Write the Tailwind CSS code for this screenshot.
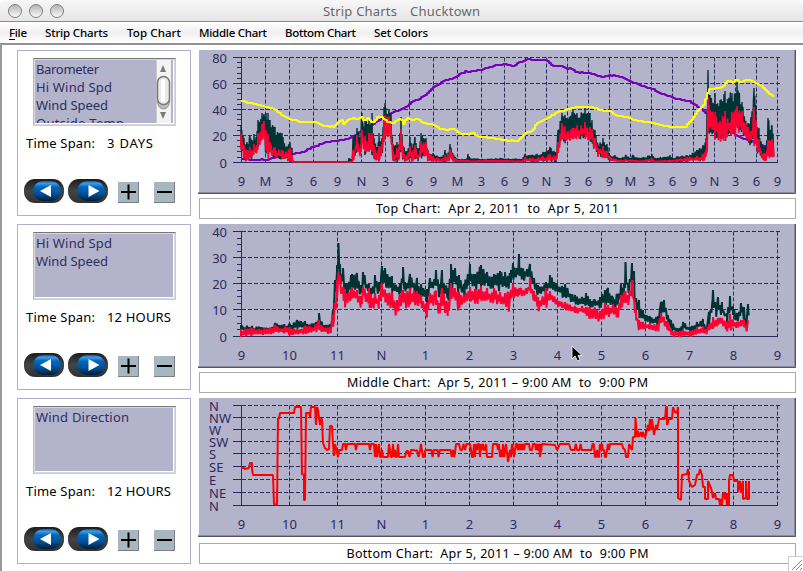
<!DOCTYPE html>
<html lang="en">
  <head>
    <meta charset="UTF-8" />
    <meta name="viewport" content="width=device-width, initial-scale=1.0" />
    <title>Strip Charts</title>
    <script src="https://cdn.jsdelivr.net/npm/@tailwindcss/browser@4"></script>
  </head>
  <body
    class="w-[803px] h-[571px] overflow-hidden bg-white text-black font-['Noto_Sans','Open_Sans',sans-serif] text-[12.5px] flex flex-col"
  >
    <!-- title bar -->
    <header
      class="relative h-[22px] shrink-0 flex items-center justify-center rounded-t-md border-b border-[#8a8a8a] bg-linear-to-b from-[#f7f7f7] to-[#e6e6e6] text-[#686868] text-[13px]"
    >
      <div class="absolute left-2 top-1 flex gap-[7px]">
        <span class="size-3.5 rounded-full border border-[#7d7d7d] bg-linear-to-b from-[#b5b5b5] to-[#fafafa]"></span>
        <span class="size-3.5 rounded-full border border-[#7d7d7d] bg-linear-to-b from-[#b5b5b5] to-[#fafafa]"></span>
        <span class="size-3.5 rounded-full border border-[#7d7d7d] bg-linear-to-b from-[#b5b5b5] to-[#fafafa]"></span>
      </div>
      <svg width="160" height="20" fill="currentColor">
        <text x="1" y="14.5" textLength="74">Strip Charts</text>
        <text x="88" y="14.5" textLength="70">Chucktown</text>
      </svg>
    </header>

    <!-- menu bar -->
    <nav class="h-[21px] shrink-0 bg-linear-to-b from-white via-[#f0f0f0] to-white">
      <svg width="440" height="21" class="text-[11.5px] font-medium">
        <text x="9" y="15" textLength="18">File</text>
        <path d="M9 17.5h6" stroke="#000" />
        <text x="45" y="15" textLength="63">Strip Charts</text>
        <text x="127" y="15" textLength="54">Top Chart</text>
        <text x="199" y="15" textLength="68">Middle Chart</text>
        <text x="285" y="15" textLength="71">Bottom Chart</text>
        <text x="374" y="15" textLength="54">Set Colors</text>
      </svg>
    </nav>

    <main
      class="relative grow border-t-2 border-l-2 border-t-[#909090] border-l-[#999] pl-[15px] pt-[5px] flex gap-[7px]"
    >
      <div id="panels" class="w-[174px] flex flex-col gap-2"></div>
      <div id="charts" class="w-[598px] flex flex-col"></div>
      <svg class="absolute right-0 bottom-0 bg-white" width="15" height="15">
        <path d="M.5 15V.5H15" fill="none" stroke="#ccc" />
        <path d="M4 14L14 4M8 14L14 8M12 14L14 12" stroke="#888" />
      </svg>
    </main>

    <!-- mouse pointer -->
    <svg class="absolute left-[571px] top-[345px]" width="12" height="18">
      <path
        d="M1 1V14L4 11L6.500 16L9 15L7 10.500H11Z"
        fill="#000"
        stroke="#fff"
        stroke-width=".8"
      />
    </svg>

    <!-- shared pill button gradients -->
    <svg class="absolute" width="0" height="0">
      <defs>
        <linearGradient id="pill" x2="0" y2="1">
          <stop offset="0" stop-color="#1c1c1c" />
          <stop offset=".5" stop-color="#444" />
          <stop offset="1" stop-color="#303030" />
        </linearGradient>
        <linearGradient id="lens" x2="0" y2="1">
          <stop offset="0" stop-color="#0a5eb0" />
          <stop offset=".12" stop-color="#3f9be0" />
          <stop offset=".3" stop-color="#0068c0" />
          <stop offset=".65" stop-color="#004f96" />
          <stop offset="1" stop-color="#001c38" />
        </linearGradient>
      </defs>
    </svg>

    <script>
      const panels = [
        { items: ["Barometer", "Hi Wind Spd", "Wind Speed", "Outside Temp"], span: "3 DAYS", w: 46, scroll: true },
        { items: ["Hi Wind Spd", "Wind Speed"], span: "12 HOURS", w: 64 },
        { items: ["Wind Direction"], span: "12 HOURS", w: 64 },
      ];
      const itemWidth = { Barometer: 63, "Hi Wind Spd": 76, "Wind Speed": 72, "Outside Temp": 88, "Wind Direction": 93 };

      const scrollBar = `
        <svg class="absolute right-[2px] top-0" width="15" height="64">
          <rect width="15" height="64" fill="#f3f3f3"/>
          <path d="M.5 0V64" stroke="#ccc"/>
          <path d="M4 12L7 5L10 12ZM4 52L7 59L10 52Z" fill="#7b7b7b"/>
          <path d="M1 40Q2 49 7.500 49T14 40" fill="#b9b9b9" stroke="#999"/>
          <rect x="1.500" y="16.500" width="12" height="28" rx="6" fill="#e9e9e9" stroke="#777" stroke-width="1.500"/>
          <rect x="5" y="19" width="4" height="23" rx="2" fill="#fff"/>
        </svg>`;

      const pill = (arrow) => `
        <svg width="40" height="24">
          <rect width="40" height="24" rx="11" fill="url(#pill)"/>
          <rect x="9" y="2" width="28" height="20" rx="10" fill="url(#lens)"/>
          <path d="${arrow}" fill="#fff"/>
        </svg>`;

      const square = (sign) => `
        <svg width="21" height="21">
          <rect width="21" height="21" fill="#a6b7c0"/>
          <path d="M0 20.500H20.500V0" stroke="#7c7c7c" fill="none"/>
          <path d="${sign}" stroke="#000" stroke-width="2"/>
        </svg>`;

      document.getElementById("panels").innerHTML = panels.map((p) => `
        <section class="h-[166px] border border-[#b0b0cc] pt-[7px]">
          <div class="relative ml-[15px] w-[143px] h-[68px] border-t border-l border-b border-r border-t-[#777] border-l-[#bbb] border-b-[#ccc] border-r-[#ccc] p-px bg-[#d8d8d8] overflow-hidden">
            <div class="relative h-full bg-[#b3b3cc] border-b border-r border-white overflow-hidden">
              <svg width="138" height="63" class="text-[13px]" fill="#2e2e60">
                ${p.items.map((t, i) => `<text x="1" y="${14 + i * 18}" textLength="${itemWidth[t]}">${t}</text>`).join("")}
              </svg>
              ${p.scroll ? scrollBar : ""}
            </div>
          </div>
          <svg width="170" height="20" class="mt-[7px] text-[13px]">
            <text x="8" y="15" textLength="69">Time Span:</text>
            <text x="89" y="15" textLength="${p.w}">${p.span}</text>
          </svg>
          <div class="flex items-end mt-[26px] pl-1.5">
            ${pill("M27 6V18L16 12Z")}
            <span class="w-1"></span>
            ${pill("M20.500 6V18L31.500 12Z")}
            <span class="w-2.5"></span>
            ${square("M3 10H18M10.500 2.500V17.500")}
            <span class="w-[15px]"></span>
            ${square("M3 10H18")}
          </div>
        </section>`).join("");

      // small repeatable random generator
      let seed = 7;
      const rnd = () => (seed = (seed * 16807) % 2147483647) / 2147483647;

      function lerp(env, x, col) {
        let i = 1;
        while (i < env.length - 1 && env[i][0] < x) i++;
        const a = env[i - 1], b = env[i];
        const t = Math.min(1, Math.max(0, (x - a[0]) / (b[0] - a[0])));
        return a[col] + (b[col] - a[col]) * t;
      }

      // zigzag between two columns of an envelope table, touching every knot
      function band(env, hi, lo, step, jitter) {
        const pts = [];
        let up = false;
        let k = 0;
        for (let x = env[0][0]; x <= env[env.length - 1][0]; x += step) {
          while (k < env.length && env[k][0] <= x) {
            pts.push(env[k][0] + "," + env[k][hi]);
            up = false;
            k++;
          }
          const a = lerp(env, x, hi), b = lerp(env, x, lo);
          const r = rnd() * jitter * (b - a);
          pts.push(x.toFixed(1) + "," + (up ? a + r : b - r).toFixed(1));
          up = !up;
        }
        return pts.join(" ");
      }

      // turns a smooth curve into the one pixel stairs of a sampled sensor
      function stairs(curve) {
        const env = curve.split(" ").map((p) => p.split(",").map(Number));
        const pts = [];
        let last = null;
        for (let x = env[0][0]; x <= env[env.length - 1][0]; x += 2) {
          const y = Math.round(lerp(env, x, 1) + (rnd() - 0.5) * 0.8);
          if (last !== null && y !== last) pts.push(x + "," + last);
          pts.push(x + "," + y);
          last = y;
        }
        return pts.join(" ");
      }

      const line = (pts, color, width) =>
        `<polyline points="${pts}" fill="none" stroke="${color}" stroke-width="${width}" stroke-linejoin="bevel"/>`;

      const NAVY = "#2b2b5c";
      const DARK = "#003333";
      const RED = "#ff0033";

      // x, gust top, speed top, speed bottom
      const topWind = [
        [241,125,134,150],[244,138,145,161],[247,142,150,162],[250,136,147,159],[252,140,151,159],[254,134,144,157],
        [256,137,147,155],[258,120,133,150],[262,113,124,142],[264,114,121,137],[266,113,130,161],[268,113,134,161],
        [270,120,142,157],[275,127,147,160],[282,133,150,160],[286,147,152,161],[290,142,148,162],[292,148,156,162],
        [293,162,162,162],[348,162,162,162],[349,158,162,162],[351,159,162,162],[352,162,162,162],[353,138,150,162],
        [357,128,135,153],[360,137,148,157],[362,113,130,145],[365,120,136,156],[369,120,133,152],[372,113,133,155],
        [374,138,145,159],[377,147,153,162],[379,133,146,162],[382,138,144,157],[384,107,120,142],[385,103,115,135],
        [389,110,116,138],[391,114,126,140],[393,144,152,162],[397,142,148,162],[399,144,146,162],[401,117,129,150],
        [403,146,150,162],[407,151,155,162],[410,137,146,160],[412,148,152,162],[415,137,145,160],[418,150,155,162],
        [421,133,141,160],[426,138,142,158],[428,150,152,162],[433,153,156,162],[442,157,159,162],[445,150,155,162],
        [447,156,157,162],[450,144,149,161],[453,154,155,162],[457,159,160,162],[467,159,160,162],[468,154,160,162],
        [470,158,161,162],[485,159,160,162],[500,158,160,162],[522,159,161,162],[525,154,157,162],[533,155,158,162],
        [543,152,156,162],[550,147,154,162],[556,152,156,162],[558,130,142,157],[562,113,123,142],[565,115,127,144],
        [568,119,131,140],[573,110,128,143],[577,113,125,140],[585,108,122,139],[590,113,127,141],[592,120,129,148],
        [595,130,138,150],[598,145,148,157],[603,138,146,158],[607,144,151,159],[610,155,157,162],[615,155,159,162],
        [620,158,160,162],[626,155,159,162],[630,158,160,162],[633,155,160,162],[640,158,161,162],[652,154,158,162],
        [655,158,161,162],[670,155,160,162],[673,158,160,162],[677,156,159,162],[687,155,157,162],[697,150,156,162],
        [703,145,154,162],[706,138,150,160],[707,110,140,158],[708,70,98,135],[709,95,105,137],[715,93,112,140],
        [720,100,121,143],[725,91,111,143],[732,93,112,139],[736,93,109,138],[737,82,106,133],[742,102,111,135],
        [748,123,127,143],[751,117,131,149],[754,88,107,148],[756,105,120,148],[757,127,138,155],[759,128,140,158],
        [763,147,154,162],[767,140,150,162],[768,118,140,161],[772,126,139,157],[774,133,146,160],
      ];

      const barometer =
        "241,159 253,159.500 265,160 278,157 290,154 300,153 308,149 315,146 322,143 332,141.500 348,138.500 353,137 362,130 377,121 387,115 395,111 400,109 403,108 410,103 414,101 420,98 427,93 432,88 438,84 445,80 452,79 458,75 465,71.500 475,71 483,69 488,68 493,66 503,64 513,66 520,62 524,60 527,59 535,60 545,60 553,66 560,66 567,68.500 570,68 575,72 590,73 600,77 613,75 625,79 632,83 643,86 652,89 660,93 673,98 690,102 697,107 707,114 718,123 730,132 737,136 745,139 757,143 765,146 770,147";
      const temp =
        "241,101 253,104 262,106.500 272,108 280,114 289,119.500 298,121.500 313,122 322,125 333,127 338,122 341,120 343,124 349,118.500 357,119 361,116.500 364,121 367,118 371,122 374,121 378,116 382,118 387,122 392,123 397,120 400,118 403,124 406,118 410,120 418,119 423,123 433,125 440,129 447,130 452,128 458,133 467,134 472,133 478,137 493,138 505,140 517,141 521,137 525,133 532,131 535,125 539,122 543,120 549,117 555,113 561,111 567,109 577,107 590,106.500 600,110 610,112 617,116 627,117 637,121 647,122 660,125 673,127 685,127 690,121 697,111 703,105 707,93 709,89 715,88 722,87 727,81 732,82 736,80 740,83 748,79 753,82 760,86 767,92 774,98";

      // x, gust top, gust bottom, speed top, speed bottom
      const midWind = [
        [241,325,332,329,337],[252,326,332,328,336],[270,328,333,328,337],[275,323,331,325,334],[290,324,331,327,335],
        [297,320,330,329,336],[305,321,331,326,334],[316,322,330,325,333],[319,313,326,320,331],[322,323,330,326,333],
        [330,324,330,328,336],[333,310,325,315,332],[335,280,310,303,318],[337,265,290,280,305],[338.500,243,275,272,285],
        [340,264,290,275,295],[343,268,289,287,299],[345,283,297,289,310],[351,275,295,289,302],[352,274,290,287,299],
        [357,273,297,290,304],[361,285,300,296,311],[363,272,290,287,299],[369,283,298,288,307],[371,288,298,294,311],
        [375,275,295,293,308],[379,282,296,295,309],[382,266,285,283,296],[385,268,288,290,306],[392,276,296,292,315],
        [400,283,295,295,316],[403,267,290,290,305],[405,282,296,293,312],[410,274,293,288,306],[417,278,296,291,306],
        [421,284,300,295,308],[427,289,303,302,319],[430,278,295,293,308],[436,270,289,291,306],[439,284,306,303,316],
        [442,270,295,288,310],[448,288,305,302,317],[451,264,290,283,305],[455,268,290,288,303],[459,275,295,292,313],
        [464,284,298,295,305],[470,264,287,287,302],[475,274,290,289,304],[481,265,289,286,304],[487,272,290,288,305],
        [494,274,290,288,305],[500,271,292,292,304],[505,272,290,293,306],[508,276,292,292,316],[511,270,286,290,302],
        [513,263,284,284,298],[517,268,280,289,298],[519,254,275,288,296],[521,268,282,288,296],[527,269,280,289,296],
        [530,264,283,278,294],[534,278,290,291,303],[538,285,298,297,313],[546,282,295,288,312],[550,275,288,291,299],
        [557,284,295,299,307],[562,286,298,302,309],[565,284,298,302,310],[575,295,305,306,313],[582,297,305,306,314],
        [586,293,306,307,316],[590,299,308,307,322],[595,300,308,308,318],[600,297,310,311,325],[605,290,308,303,318],
        [608,288,305,305,318],[613,298,308,304,316],[617,294,310,308,321],[621,284,302,295,308],[624,284,296,292,305],
        [625.500,262,285,291,303],[628,285,298,295,308],[632,263,285,280,295],[634,271,300,298,312],[636,298,312,310,324],
        [639,300,318,320,332],[643,310,322,322,330],[650,317,325,323,330],[658,316,326,325,333],[661,302,318,313,325],
        [664,300,315,317,325],[668,315,325,322,332],[671,320,334,329,337],[680,328,335,331,338],[683,322,331,330,336],
        [690,327,332,331,337],[697,322,330,327,335],[703,319,328,326,333],[706,328,333,330,337],[709,312,325,324,332],
        [713,290,310,317,330],[716,307,320,320,327],[718,297,313,318,326],[720,305,318,318,325],[722,302,318,318,328],
        [727,314,323,322,332],[730,296,315,314,334],[733,307,320,321,328],[737,313,323,322,328],[741,303,317,320,326],
        [744,307,320,320,330],[746,322,330,328,334],[748,304,318,320,332],[749,304,318,320,325],
      ];

      // wind direction wobbles between fixed compass steps
      function wobble(x0, x1, levels, step) {
        let s = "";
        for (let x = x0; x < x1; x += step) s += x + "," + levels[Math.floor(rnd() * levels.length)] + " ";
        return s;
      }
      const direction =
        "241,468 244,468 245,469 249,468 250,463 252,463 252,469 253,475 273,475 274,504 277,505 278,418 279,419 280,413 294,413 295,407 301,407 302,474 304,475 304,500 305,500 306,413 309,413 310,417 311,407 315,407 316,425 317,407 318,410 320,425 321,419 322,419 323,443 325,448 327,450 329,449 330,426 332,426 333,445 334,456 335,444 337,452 338,457 339,450 342,450 343,444 345,444 346,450 347,444 355,444 356,450 357,444 369,444 370,450 371,444 374,444 375,457 " +
        wobble(376, 405, [444, 450, 457, 457], 1) +
        wobble(405, 421, [450, 451, 457], 1.5) + "421,444 " +
        wobble(423, 456, [450, 450, 457], 1.2) +
        wobble(456, 470, [444, 444, 450], 1.5) +
        wobble(470, 505, [444, 450, 457], 1) + "506,444 508,462 " +
        wobble(510, 517, [450, 457, 444], 1) +
        wobble(517, 543, [444, 444, 450], 1) + "539,444 540,457 542,444 555,445 557,450 560,444 569,444 " +
        wobble(571, 595, [444, 450, 450], 1.2) +
        wobble(595, 610, [444, 450, 457], 1) +
        "610,444 622,444 623,448 625,450 626,457 628,457 629,444 632,450 633,437 635,437 635.500,418 637,437 638,431 639,437 641,432 642,437 643,432 645,438 647,430 648,425 649,431 650,419 651,430 652,419 654,435 656,425 657,430 659,419 665,419 666,407 667,407 667,425 669,419 672,419 673,407 675,412 677,413 678,407 678,498 681,500 682,475 687,474 688,469 689,481 692,487 695,485 697,475 699,474 700,469 702,475 703,487 705,487 705,499 708,499 708,481 711,488 712,492 713,498 " +
        wobble(715, 729, [493, 499, 505], 1) +
        "729,505 729,481 730,475 733,475 734,481 738,481 738,492 740,481 741,493 743,481 743,499 746,498 746,481 747,499 749,499 749,481";

      const charts = [
        {
          y: 50, h: 144, gap: 4,
          rows: [57.5, 83.5, 109.5, 135.5, 162.5], labels: ["80", "60", "40", "20", "0"], minor: 5,
          cols: [265.5, 289.5, 313.5, 337.5, 361.5, 385.5, 409.5, 433.5, 457.5, 481.5, 504.5, 525.5, 546.5, 567.5, 588.5, 609.5, 630.5, 651.5, 672.5, 693.5, 714.5, 735.5, 756.5, 777.5],
          names: "M 3 6 9 N 3 6 9 M 3 6 9 N 3 6 9 M 3 6 9 N 3 6 9".split(" "),
          axisY: 186,
          series: () =>
            line(stairs(barometer), "#7700bb", 2.2) +
            line(band(topWind, 1, 3, 0.7, 0.25), DARK, 1.4) +
            line(band(topWind, 2, 3, 0.7, 0.45), RED, 1.7) +
            line(stairs(temp), "#ffff00", 2),
          caption: "Top Chart:&nbsp; Apr 2, 2011&nbsp; to&nbsp; Apr 5, 2011", cw: 243,
        },
        {
          y: 224, h: 144, gap: 4,
          rows: [231.5, 257.5, 283.5, 309.5, 336.5], labels: ["40", "30", "20", "10", "0"], minor: 4,
          cols: [289.5, 337.5, 381.5, 425.5, 469.5, 513.5, 557.5, 601.5, 645.5, 689.5, 733.5, 777.5],
          names: "10 11 N 1 2 3 4 5 6 7 8 9".split(" "),
          axisY: 360,
          series: () =>
            line(band(midWind, 1, 2, 1.2, 0.4), DARK, 2) +
            line(band(midWind, 3, 4, 1.3, 0.35), RED, 2),
          caption: "Middle Chart:&nbsp; Apr 5, 2011 – 9:00 AM&nbsp; to&nbsp; 9:00 PM", cw: 301,
        },
        {
          y: 398, h: 139, gap: 6,
          rows: [405.5, 417.5, 429.5, 441.5, 453.5, 466.5, 479.5, 492.5, 505.5],
          labels: ["N", "NW", "W", "SW", "S", "SE", "E", "NE", "N"], minor: 1, left: true,
          cols: [289.5, 337.5, 381.5, 425.5, 469.5, 513.5, 557.5, 601.5, 645.5, 689.5, 733.5, 777.5],
          names: "10 11 N 1 2 3 4 5 6 7 8 9".split(" "),
          axisY: 529,
          series: () => line(direction, "#ff0000", 2),
          caption: "Bottom Chart:&nbsp; Apr 5, 2011 – 9:00 AM&nbsp; to&nbsp; 9:00 PM", cw: 302,
        },
      ];

      function grid(c) {
        const top = c.rows[0], bottom = c.rows[c.rows.length - 1];
        let solid = `M241.500 ${top}V${bottom}M233 ${bottom}H778`;
        let dashed = "";
        c.rows.forEach((y, i) => {
          solid += `M233 ${y}H242`;
          if (y === bottom) return;
          dashed += `M242 ${y}H780`;
          for (let k = 1; k < c.minor; k++) {
            const t = Math.floor(y + ((c.rows[i + 1] - y) * k) / c.minor) + 0.5;
            solid += `M237 ${t}H242`;
          }
        });
        c.cols.forEach((x) => (dashed += `M${x} ${top}V${bottom}`));
        return `<path d="${dashed}" stroke="${NAVY}" stroke-dasharray="4 2"/><path d="${solid}" stroke="${NAVY}"/>`;
      }

      document.getElementById("charts").innerHTML = charts.map((c) => `
        <svg class="block shrink-0 text-[13px]" width="598" height="${c.h}" viewBox="198 ${c.y} 598 ${c.h}" fill="${NAVY}">
          <rect x="199" y="${c.y}" width="597" height="${c.h}" fill="#b3b3cc"/>
          <path d="M198 ${c.y + c.h - 1.5}H794.500V${c.y}" fill="none" stroke="#8c8ca0"/>
          <path d="M198 ${c.y + c.h - 0.5}H795.500V${c.y - 1}" fill="none" stroke="#55555f"/>
          ${grid(c)}
          ${c.labels.map((t, i) => `<text x="${c.left ? 209 : 227}" y="${c.rows[i] + 5}" text-anchor="${c.left ? "start" : "end"}">${t}</text>`).join("")}
          ${["9", ...c.names].map((t, i) => `<text x="${i ? c.cols[i - 1] : 241.5}" y="${c.axisY}" text-anchor="middle">${t}</text>`).join("")}
          ${c.series()}
        </svg>
        <div class="ml-[1px] h-[21px] shrink-0 border border-[#aaa] bg-white" style="margin-top:${c.gap}px;margin-bottom:5px">
          <svg class="block text-[12.5px]" width="595" height="19">
            <text x="${(595 - c.cw) / 2}" y="14" textLength="${c.cw}">${c.caption}</text>
          </svg>
        </div>`).join("");
    </script>
  </body>
</html>
